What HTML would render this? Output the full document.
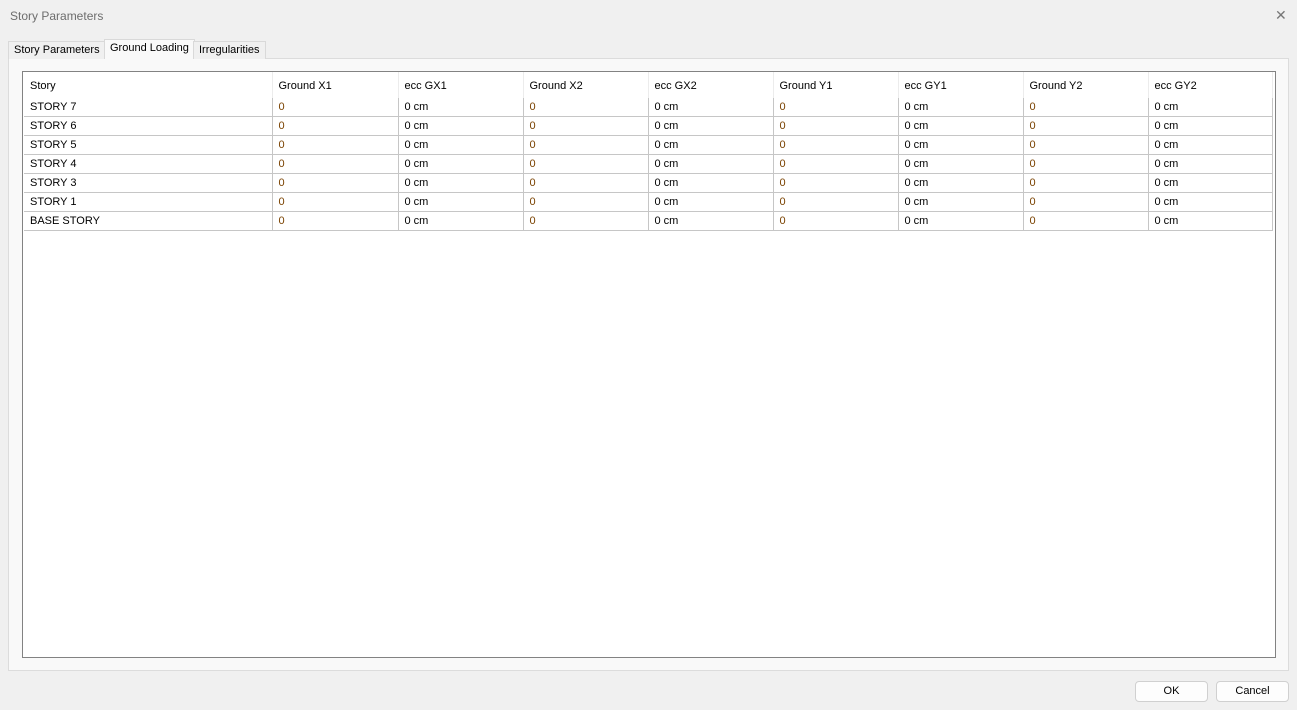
<!DOCTYPE html>
<html><head><style>
body{margin:0;width:1297px;height:710px;background:#f0f0f0;font-family:"Liberation Sans",sans-serif;font-size:11px;color:#000;position:relative;overflow:hidden}
.abs{position:absolute}
.title{left:10px;top:9px;font-size:12px;color:#6d6d6d}
.close{left:1275px;top:7px;font-size:14px;color:#777}
.tab{top:41px;height:17px;border:1px solid #d9d9d9;border-bottom:none;background:#f0f0f0;line-height:16px;padding:0 5px;font-size:11px}
.panel{left:8px;top:58px;width:1279px;height:611px;border:1px solid #dcdcdc;background:#f9f9f9}
.grid{left:22px;top:71px;width:1252px;height:585px;border:1px solid #828282;background:#fff}
table{border-collapse:collapse;position:absolute;left:1px;top:0;font-size:11px;table-layout:fixed;width:1248px}
td{height:18px;padding:0 0 0 6px;border-right:1px solid #c6c6c6;border-bottom:1px solid #c6c6c6;white-space:nowrap;overflow:hidden}
tr.h td{height:24px;border-bottom:none;border-right:1px solid #ececec;padding-top:2px}
td.n{color:#7a4200}
.btn{top:681px;width:71px;height:19px;border:1px solid #d0d0d0;border-radius:4px;background:#fdfdfd;text-align:center;line-height:19px}
</style></head><body>
<div class="abs title">Story Parameters</div>
<div class="abs close">✕</div>
<div class="abs panel"></div>
<div class="abs tab" style="left:8px;">Story Parameters</div>
<div class="abs tab" style="left:104px;top:39px;height:19px;background:#f9f9f9;line-height:17px">Ground Loading</div>
<div class="abs tab" style="left:193px;">Irregularities</div>
<div class="abs grid">
<table>
<colgroup><col style="width:248px"><col style="width:126px"><col style="width:125px"><col style="width:125px"><col style="width:125px"><col style="width:125px"><col style="width:125px"><col style="width:125px"><col style="width:124px"></colgroup>
<tr class="h"><td>Story</td><td>Ground X1</td><td>ecc GX1</td><td>Ground X2</td><td>ecc GX2</td><td>Ground Y1</td><td>ecc GY1</td><td>Ground Y2</td><td>ecc GY2</td></tr>
<tr><td>STORY 7</td><td class="n">0</td><td>0 cm</td><td class="n">0</td><td>0 cm</td><td class="n">0</td><td>0 cm</td><td class="n">0</td><td>0 cm</td></tr>
<tr><td>STORY 6</td><td class="n">0</td><td>0 cm</td><td class="n">0</td><td>0 cm</td><td class="n">0</td><td>0 cm</td><td class="n">0</td><td>0 cm</td></tr>
<tr><td>STORY 5</td><td class="n">0</td><td>0 cm</td><td class="n">0</td><td>0 cm</td><td class="n">0</td><td>0 cm</td><td class="n">0</td><td>0 cm</td></tr>
<tr><td>STORY 4</td><td class="n">0</td><td>0 cm</td><td class="n">0</td><td>0 cm</td><td class="n">0</td><td>0 cm</td><td class="n">0</td><td>0 cm</td></tr>
<tr><td>STORY 3</td><td class="n">0</td><td>0 cm</td><td class="n">0</td><td>0 cm</td><td class="n">0</td><td>0 cm</td><td class="n">0</td><td>0 cm</td></tr>
<tr><td>STORY 1</td><td class="n">0</td><td>0 cm</td><td class="n">0</td><td>0 cm</td><td class="n">0</td><td>0 cm</td><td class="n">0</td><td>0 cm</td></tr>
<tr><td>BASE STORY</td><td class="n">0</td><td>0 cm</td><td class="n">0</td><td>0 cm</td><td class="n">0</td><td>0 cm</td><td class="n">0</td><td>0 cm</td></tr>
</table>
</div>
<div class="abs btn" style="left:1135px">OK</div>
<div class="abs btn" style="left:1216px">Cancel</div>
</body></html>
